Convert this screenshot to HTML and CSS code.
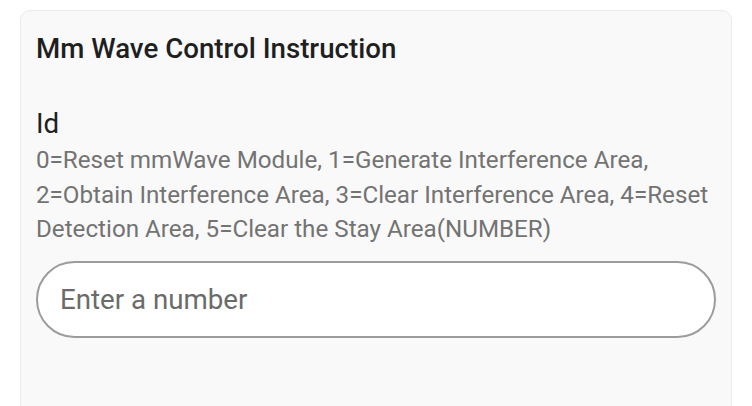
FILE: index.html
```html
<!DOCTYPE html>
<html>
<head>
  <meta charset="UTF-8">
  <title>Mm Wave Control Instruction</title>
  <link rel="stylesheet" href="styles.css">
</head>
<body>
  <div class="card">
    <!-- Header -->
    <div class="card-title">Mm Wave Control Instruction</div>

    <!-- Field -->
    <div class="field">
      <div class="field-label">Id</div>
      <div class="field-help">0=Reset mmWave Module, 1=Generate Interference Area, 2=Obtain Interference Area, 3=Clear Interference Area, 4=Reset Detection Area, 5=Clear the Stay Area(NUMBER)</div>
      <input class="field-input" type="number" placeholder="Enter a number">
    </div>
  </div>
</body>
</html>
```

FILE: styles.css
```css
* {
  box-sizing: border-box;
}

html, body {
  margin: 0;
  padding: 0;
  background: #ffffff;
  font-family: Roboto, "Liberation Sans", sans-serif;
  overflow: hidden;
}

body {
  padding: 10px 20px 0 20px;
}

.card {
  background: #f9f9f9;
  border: 1.5px solid #ebebeb;
  border-radius: 10px;
  padding: 18.7px 15px 120px 15px;
}

.card-title {
  font-size: 27.7px;
  font-weight: 500;
  line-height: 38px;
  color: #1f1f1f;
}

.field {
  margin-top: 38.3px;
  display: flex;
  flex-direction: column;
}

.field-label {
  font-size: 27.7px;
  line-height: 36px;
  color: #212121;
}

.field-help {
  margin-top: 1.3px;
  font-size: 24.2px;
  line-height: 34.6px;
  color: #737373;
}

.field-input {
  margin-top: 14.4px;
  height: 77px;
  border: 2px solid #9c9c9c;
  border-radius: 40px;
  background: #ffffff;
  padding: 0 22px;
  font-family: inherit;
  font-size: 27.7px;
  color: #212121;
  outline: none;
}

.field-input::placeholder {
  color: #6b6b6b;
}

.field-input::-webkit-outer-spin-button,
.field-input::-webkit-inner-spin-button {
  -webkit-appearance: none;
  margin: 0;
}
```
